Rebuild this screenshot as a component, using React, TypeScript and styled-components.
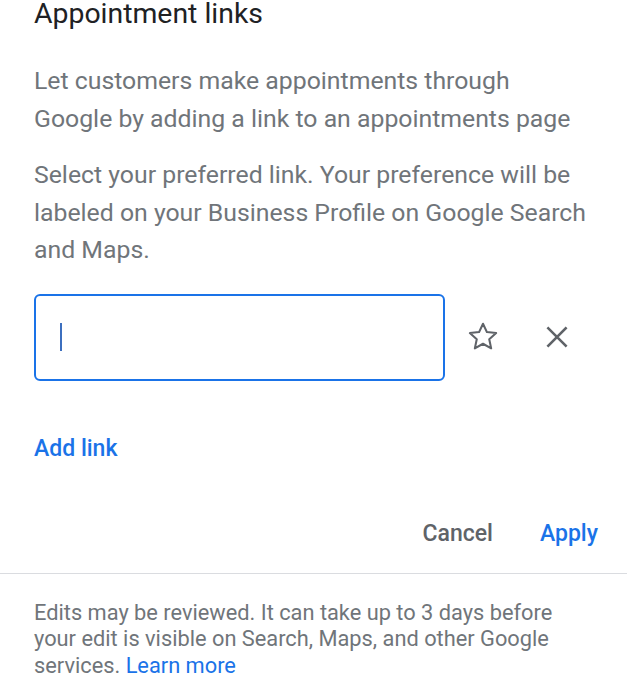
import styled, { createGlobalStyle } from "styled-components";

const Global = createGlobalStyle`
  html, body {
    margin: 0;
    padding: 0;
    background: #ffffff;
  }
  body {
    font-family: Roboto, "Liberation Sans", Arial, sans-serif;
  }
`;

function StarIcon() {
  return (
    <svg width="38" height="38" viewBox="0 0 24 24" fill="none">
      <path
        d="M12 3.6l2.47 5.3 5.83.62-4.36 3.93 1.22 5.73L12 16.27l-5.16 2.91 1.22-5.73L3.7 9.52l5.83-.62L12 3.6z"
        stroke="#5f6368"
        strokeWidth="1.3"
        strokeLinejoin="round"
      />
    </svg>
  );
}

function CloseIcon() {
  return (
    <svg width="26" height="26" viewBox="0 0 24 24" fill="none">
      <path d="M4 4l16 16M20 4L4 20" stroke="#5f6368" strokeWidth="2.4" strokeLinecap="square" />
    </svg>
  );
}

export default function App() {
  return (
    <>
      <Global />
      <Panel>
        <Body>
          <Title>Appointment links</Title>
          <Paragraph>
            Let customers make appointments through Google by adding a link to an appointments page
          </Paragraph>
          <Paragraph>
            Select your preferred link. Your preference will be labeled on your Business Profile on Google Search and Maps.
          </Paragraph>
          <LinkRow>
            <InputBox>
              <Caret />
            </InputBox>
            <IconButton aria-label="Preferred">
              <StarIcon />
            </IconButton>
            <IconButton aria-label="Remove">
              <CloseIcon />
            </IconButton>
          </LinkRow>
          <TextButton $tone="primary">Add link</TextButton>
          <Actions>
            <TextButton $tone="neutral">Cancel</TextButton>
            <TextButton $tone="primary">Apply</TextButton>
          </Actions>
        </Body>
        <Footer>
          Edits may be reviewed. It can take up to 3 days before your edit is visible on Search, Maps, and other Google
          services. <FooterLink>Learn more</FooterLink>
        </Footer>
      </Panel>
    </>
  );
}

const Panel = styled.div`
  width: 627px;
  height: 675px;
  overflow: hidden;
  background: #ffffff;
`;

const Body = styled.div`
  padding: 0 20px 0 34px;
  display: flex;
  flex-direction: column;
`;

const Title = styled.h1`
  margin: -5px 0 0;
  font-size: 28.4px;
  line-height: 38px;
  font-weight: 400;
  color: #202124;
`;

const Paragraph = styled.p`
  margin: 29px 0 0;
  font-size: 24.8px;
  line-height: 37.5px;
  color: #70757a;
  max-width: 555px;

  & + & {
    margin-top: 19px;
  }
`;

const LinkRow = styled.div`
  margin-top: 25px;
  display: flex;
  align-items: center;
`;

const InputBox = styled.div`
  box-sizing: border-box;
  width: 411px;
  height: 87px;
  border: 2px solid #1a73e8;
  border-radius: 6px;
  display: flex;
  align-items: center;
  padding-left: 24px;
`;

const Caret = styled.span`
  width: 2px;
  height: 28px;
  background: #3c6fbf;
`;

const IconButton = styled.button`
  border: 0;
  background: none;
  padding: 0;
  width: 40px;
  height: 40px;
  display: flex;
  align-items: center;
  justify-content: center;
  cursor: pointer;

  &:first-of-type {
    margin-left: 18px;
  }
  & + & {
    margin-left: 34px;
  }
`;

const TextButton = styled.button<{ $tone: "primary" | "neutral" }>`
  border: 0;
  background: none;
  padding: 0;
  align-self: flex-start;
  font-family: Roboto, "Liberation Sans", Arial, sans-serif;
  font-size: 23px;
  line-height: 30px;
  font-weight: 500;
  color: ${(p) => (p.$tone === "primary" ? "#1a73e8" : "#5f6368")};
  cursor: pointer;

  ${LinkRow} + & {
    margin-top: 53px;
  }
`;

const Actions = styled.div`
  margin-top: 55px;
  display: flex;
  justify-content: flex-end;
  gap: 47px;
  padding-right: 9px;
`;

const Footer = styled.div`
  margin-top: 24px;
  border-top: 1px solid #dadce0;
  padding: 26px 60px 0 34px;
  font-size: 21.8px;
  line-height: 26.5px;
  color: #70757a;
`;

const FooterLink = styled.a`
  color: #1a73e8;
  text-decoration: none;
`;
